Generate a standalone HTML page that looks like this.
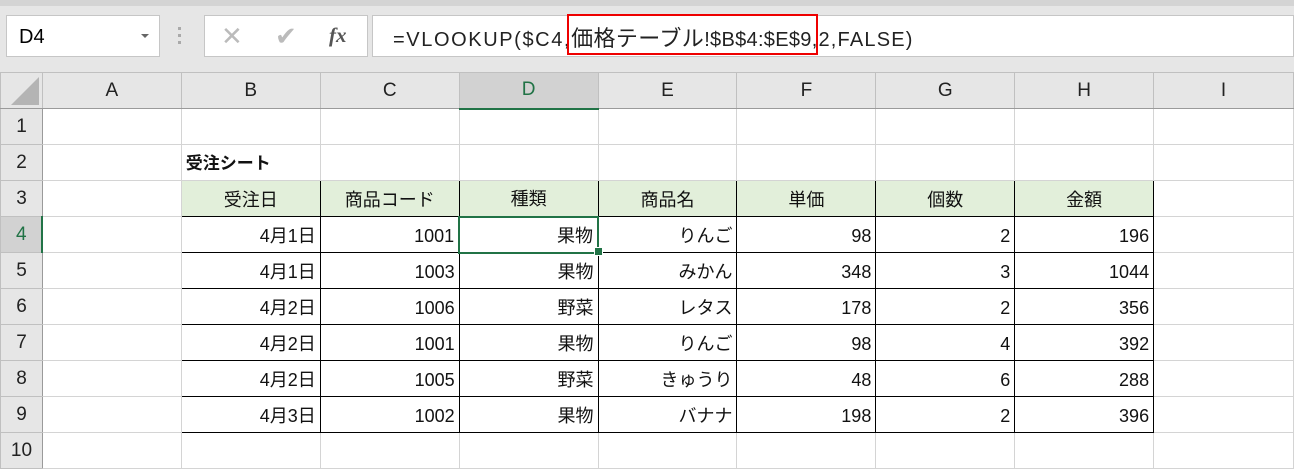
<!DOCTYPE html><html><head><meta charset="utf-8"><style>
body{margin:0;width:1294px;height:468px;overflow:hidden;background:#e6e6e6;font-family:"Liberation Sans","Noto Sans CJK JP",sans-serif;position:relative}
.a{position:absolute}
.box{background:#fff;border:1px solid #c6c6c6;box-sizing:border-box}
table{border-collapse:collapse;table-layout:fixed;position:absolute;left:0;top:72px}
tr{height:36px}
td{height:35px;box-sizing:border-box;padding:2px 4px 0 4px;line-height:20px;font-size:18px;border:1px solid #d4d4d4;background:#fff;white-space:nowrap;overflow:hidden;text-align:right;color:#111}
td.h{background:#e6e6e6;text-align:center;border-color:#c0c0c0;color:#222;font-size:19px;padding:0}
tr.ch td{border-bottom:1px solid #9a9a9a}
td.rh{border-right:1px solid #9a9a9a}
td.t{border:1px solid #000}
td.g{background:#e2efda;text-align:center;border:1px solid #000}
.cj{font-size:22px}
</style></head><body>
<div class="a" style="left:0;top:0;width:1294px;height:6px;background:#d4d4d4"></div>
<div class="a box" style="left:6px;top:15px;width:154px;height:42px;font-size:20px;padding:10px 0 0 12px">D4<span class="a" style="left:134px;top:18px;width:0;height:0;border-left:4px solid transparent;border-right:4px solid transparent;border-top:4px solid #666"></span></div>
<div class="a" style="left:178px;top:27px;width:3px;height:18px;background:repeating-linear-gradient(#aaa 0 3px,transparent 3px 7px)"></div>
<div class="a box" style="left:204px;top:15px;width:164px;height:42px">
<span class="a" style="left:16px;top:5px;font-size:26px;color:#bbb">✕</span>
<span class="a" style="left:70px;top:5px;font-size:26px;color:#bbb">✔</span>
<span class="a" style="left:124px;top:7px;font-size:21px;font-style:italic;font-family:'Liberation Serif',serif;font-weight:bold;color:#555">fx</span></div>
<div class="a box" style="left:372px;top:15px;width:922px;height:42px;font-size:20px;padding:5px 0 0 20px;color:#222;white-space:nowrap;letter-spacing:1.6px">=VLOOKUP($C4,<span class="cj" style="letter-spacing:0.4px">価格テーブル</span><span style="letter-spacing:0.3px">!$B$4:$E$9</span><span style="letter-spacing:1.2px">,2,FALSE)</span></div>
<div class="a" style="left:567px;top:14px;width:251px;height:41px;border:2px solid #e00;box-sizing:border-box"></div>
<table>
<colgroup><col style="width:42px"><col style="width:139px"><col style="width:139px"><col style="width:139px"><col style="width:139px"><col style="width:139px"><col style="width:139px"><col style="width:139px"><col style="width:139px"><col style="width:140px"></colgroup>
<tr class="ch"><td class="h" style="background:#e6e6e6;position:relative"><span class="a" style="right:3px;bottom:3px;width:0;height:0;border-left:28px solid transparent;border-bottom:28px solid #b4b4b4"></span></td><td class="h">A</td><td class="h">B</td><td class="h">C</td><td class="h" style="background:#d2d2d2;color:#217346;border-bottom:2px solid #217346">D</td><td class="h">E</td><td class="h">F</td><td class="h">G</td><td class="h">H</td><td class="h">I</td></tr>
<tr><td class="h rh">1</td><td></td><td></td><td></td><td></td><td></td><td></td><td></td><td></td><td></td></tr>
<tr><td class="h rh">2</td><td></td><td style="text-align:left;font-weight:bold;font-size:17px">受注シート</td><td></td><td></td><td></td><td></td><td></td><td></td><td></td></tr>
<tr><td class="h rh">3</td><td></td><td class="g">受注日</td><td class="g">商品コード</td><td class="g">種類</td><td class="g">商品名</td><td class="g">単価</td><td class="g">個数</td><td class="g">金額</td><td></td></tr>
<tr><td class="h rh" style="background:#d2d2d2;color:#217346;border-right:2px solid #217346">4</td><td></td><td class="t">4月1日</td><td class="t">1001</td><td class="t" style="border:2px solid #217346">果物</td><td class="t">りんご</td><td class="t">98</td><td class="t">2</td><td class="t">196</td><td></td></tr>
<tr><td class="h rh">5</td><td></td><td class="t">4月1日</td><td class="t">1003</td><td class="t">果物</td><td class="t">みかん</td><td class="t">348</td><td class="t">3</td><td class="t">1044</td><td></td></tr>
<tr><td class="h rh">6</td><td></td><td class="t">4月2日</td><td class="t">1006</td><td class="t">野菜</td><td class="t">レタス</td><td class="t">178</td><td class="t">2</td><td class="t">356</td><td></td></tr>
<tr><td class="h rh">7</td><td></td><td class="t">4月2日</td><td class="t">1001</td><td class="t">果物</td><td class="t">りんご</td><td class="t">98</td><td class="t">4</td><td class="t">392</td><td></td></tr>
<tr><td class="h rh">8</td><td></td><td class="t">4月2日</td><td class="t">1005</td><td class="t">野菜</td><td class="t">きゅうり</td><td class="t">48</td><td class="t">6</td><td class="t">288</td><td></td></tr>
<tr><td class="h rh">9</td><td></td><td class="t">4月3日</td><td class="t">1002</td><td class="t">果物</td><td class="t">バナナ</td><td class="t">198</td><td class="t">2</td><td class="t">396</td><td></td></tr>
<tr><td class="h rh">10</td><td></td><td></td><td></td><td></td><td></td><td></td><td></td><td></td><td></td></tr>
</table>
<div class="a" style="left:594px;top:247px;width:7px;height:7px;background:#217346;border:1px solid #fff"></div>
</body></html>
